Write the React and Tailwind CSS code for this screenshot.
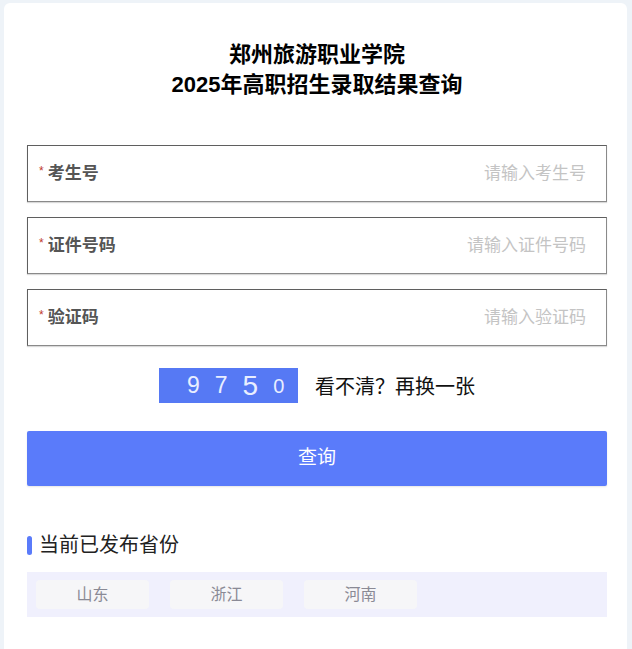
import React, { useState } from 'react';

const fields = [
    { label: '考生号', placeholder: '请输入考生号' },
    { label: '证件号码', placeholder: '请输入证件号码' },
    { label: '验证码', placeholder: '请输入验证码' },
];

const provinces = ['山东', '浙江', '河南'];

const font = { fontFamily: '"Liberation Sans", "Noto Sans CJK SC", sans-serif' };

const App = () => {
    const [values, setValues] = useState({});

    return (
        <div className="min-h-[649px] bg-[#eef3f8] pt-[3px] pl-[4px] pr-[5px]" style={font}>
            <div className="bg-white rounded-t-[6px] min-h-[646px] pl-[23px] pr-[20px] pt-[37px]">
                {/* Title */}
                <h1 className="text-center text-[22px] leading-[30px] font-bold text-black">
                    郑州旅游职业学院
                    <br />
                    2025年高职招生录取结果查询
                </h1>

                {/* Form fields */}
                <div className="mt-[45px] flex flex-col gap-[15px]">
                    {fields.map((field) => (
                        <label
                            key={field.label}
                            className="flex items-center h-[57px] border border-[#5f5f5f] border-b-[#8a8a8a] border-r-[#8a8a8a] shadow-[0_1px_1px_rgba(0,0,0,0.15)] pl-[11px] pr-[20px]"
                        >
                            <span className="text-[#c0392b] text-[12px] mr-[4px] -mt-[6px]">*</span>
                            <span className="text-[17px] font-bold text-[#555]">{field.label}</span>
                            <input
                                className="flex-1 min-w-0 text-right text-[17px] text-[#333] placeholder:text-[#c4c4c4] outline-none bg-transparent"
                                placeholder={field.placeholder}
                                value={values[field.label] || ''}
                                onChange={(e) => setValues({ ...values, [field.label]: e.target.value })}
                            />
                        </label>
                    ))}
                </div>

                {/* Captcha */}
                <div className="mt-[22px] flex items-center justify-center gap-[17px]">
                    <div className="w-[139px] h-[35px] bg-[#5679f4] flex items-center pl-[28px] gap-[15px] text-[#e8eeff] leading-none">
                        <span className="text-[23px]">9</span>
                        <span className="text-[23px]">7</span>
                        <span className="text-[28px]">5</span>
                        <span className="text-[20px]">0</span>
                    </div>
                    <span className="text-[20px] text-[#111] cursor-pointer pt-[3px]">看不清？再换一张</span>
                </div>

                {/* Submit */}
                <button className="mt-[28px] w-full h-[55px] bg-[#5a7bfa] text-white text-[19px] rounded-[2px] shadow-[0_1px_2px_rgba(0,0,0,0.1)]">
                    查询
                </button>

                {/* Published provinces */}
                <div className="mt-[44px] flex items-center gap-[7px]">
                    <span className="w-[5px] h-[19px] rounded-[3px] bg-[#5a7bfa]" />
                    <span className="text-[20px] text-[#222]">当前已发布省份</span>
                </div>
                <div className="mt-[12px] bg-[#f0f0fd] h-[45px] flex items-center px-[9px] gap-[21px]">
                    {provinces.map((p) => (
                        <div
                            key={p}
                            className="w-[113px] h-[29px] rounded-[4px] bg-[#f6f6f8] flex items-center justify-center text-[16px] text-[#8a8a95]"
                        >
                            {p}
                        </div>
                    ))}
                </div>
            </div>
        </div>
    );
};

export default App;
